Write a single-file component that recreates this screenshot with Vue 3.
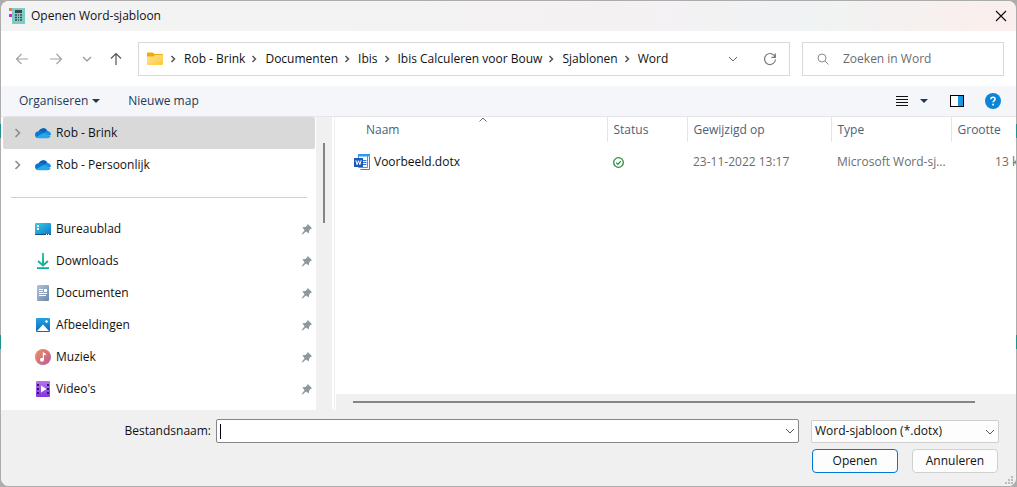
<script setup>
import { ref } from 'vue'

const crumbs = ['Rob - Brink', 'Documenten', 'Ibis', 'Ibis Calculeren voor Bouw', 'Sjablonen', 'Word']
const accounts = ref([
  { name: 'Rob - Brink', selected: true },
  { name: 'Rob - Persoonlijk', selected: false }
])
const places = [
  { name: 'Bureaublad', icon: 'desktop' },
  { name: 'Downloads', icon: 'download' },
  { name: 'Documenten', icon: 'document' },
  { name: 'Afbeeldingen', icon: 'picture' },
  { name: 'Muziek', icon: 'music' },
  { name: "Video's", icon: 'video' }
]
const fileName = ref('')
const search = ref('')
const fileType = ref('dotx')
</script>

<template>
  <div class="backdrop">
    <main class="dialog">
      <header class="titlebar">
        <svg class="app-icon" width="16" height="16" viewBox="0 0 16 16" aria-hidden="true">
          <rect x="3" width="13" height="16" fill="#80cbc4" />
          <rect y="0" width="3" height="3" fill="#ff7058" />
          <rect y="6" width="3" height="3" fill="#e815e8" />
          <rect x="6" y="2" width="7" height="3" fill="#37474f" />
          <path d="M6 7h2M9 7h1M11 7h2M6 9.500h2M9 9.500h1M11 9.500h2M6 12h2M9 12h1M11 12h2" stroke="#37474f" stroke-width="1.500" />
        </svg>
        <h1>Openen Word-sjabloon</h1>
        <button class="close" aria-label="Sluiten">
          <svg width="12" height="12" viewBox="0 0 12 12"><path d="M1 1l10 10M11 1L1 11" stroke="#111" stroke-width="1.200" /></svg>
        </button>
      </header>

      <nav class="navbar" aria-label="Navigatie">
        <div class="arrows">
          <button aria-label="Vorige"><svg width="14" height="14" viewBox="0 0 14 14"><path d="M13 7H1.500M6.500 2l-5 5 5 5" stroke="#a3a3a3" fill="none" stroke-width="1.200" /></svg></button>
          <button aria-label="Volgende"><svg width="14" height="14" viewBox="0 0 14 14"><path d="M1 7h11.500M7.500 2l5 5-5 5" stroke="#a3a3a3" fill="none" stroke-width="1.200" /></svg></button>
          <button class="recent" aria-label="Recente locaties"><svg width="10" height="10" viewBox="0 0 10 10"><path d="M1 3l4 4 4-4" stroke="#929292" fill="none" stroke-width="1.200" /></svg></button>
          <button aria-label="Omhoog"><svg width="14" height="14" viewBox="0 0 14 14"><path d="M7 13V1.500M2 6.500l5-5 5 5" stroke="#555" fill="none" stroke-width="1.200" /></svg></button>
        </div>
        <div class="address">
          <svg class="folder" width="16" height="14" viewBox="0 0 16 14" aria-hidden="true">
            <defs><linearGradient id="fold" x1="0" y1="0" x2="1" y2="1"><stop offset="0" stop-color="#ffe394" /><stop offset="1" stop-color="#ffc83a" /></linearGradient></defs>
            <path d="M0 1.500Q0 .500 1 .500h4.500L7.500 2H15q1 0 1 1v4H0z" fill="#f0a90c" />
            <path d="M0 4.500h6L8 3h7q1 0 1 1v8q0 1-1 1H1q-1 0-1-1z" fill="url(#fold)" />
          </svg>
          <ol class="crumbs">
            <li v-for="c in crumbs" :key="c">
              <svg width="6" height="8" viewBox="0 0 6 8" aria-hidden="true"><path d="M1.500 1l3 3-3 3" stroke="#555" fill="none" stroke-width="1.500" /></svg>
              <a href="#">{{ c }}</a>
            </li>
          </ol>
          <button aria-label="Vorige locaties"><svg width="10" height="10" viewBox="0 0 10 10"><path d="M1 3l4 4 4-4" stroke="#666" fill="none" /></svg></button>
          <button class="refresh" aria-label="Vernieuwen"><svg width="14" height="14" viewBox="0 0 14 14"><path d="M12.200 5.200A5.500 5.500 0 1 0 12.500 7.500M12.300 1.500v3.800H8.500" stroke="#777" fill="none" stroke-width="1.200" /></svg></button>
        </div>
        <label class="search">
          <svg width="12" height="12" viewBox="0 0 12 12" aria-hidden="true"><circle cx="5" cy="5" r="4" stroke="#8a8a8a" fill="none" /><path d="M8 8l3.500 3.500" stroke="#8a8a8a" /></svg>
          <input v-model="search" type="text" placeholder="Zoeken in Word" aria-label="Zoeken in Word" />
        </label>
      </nav>

      <div class="toolbar">
        <button>Organiseren <svg class="organise-arrow" width="8" height="4" viewBox="0 0 8 4"><path d="M0 0h8L4 4z" fill="#1e395b" /></svg></button>
        <button class="new-folder">Nieuwe map</button>
        <div class="tools">
          <button aria-label="Weergave"><svg width="12" height="11" viewBox="0 0 12 11"><path d="M0 .500h12M0 3.500h12M0 6.500h12M0 9.500h12" stroke="#111" /></svg></button>
          <button class="more" aria-label="Meer opties"><svg width="8" height="4" viewBox="0 0 8 4"><path d="M0 0h8L4 4z" fill="#1e395b" /></svg></button>
          <button class="preview" aria-label="Voorbeeldvenster">
            <svg width="14" height="12" viewBox="0 0 14 12"><rect x=".500" y=".500" width="13" height="11" fill="#fff" stroke="#000" /><rect x="8" y="1" width="5" height="10" fill="#1898e0" /></svg>
          </button>
          <button aria-label="Help">
            <svg width="16" height="16" viewBox="0 0 16 16"><circle cx="8" cy="8" r="8" fill="#0b84d8" /><path d="M5.900 6.200q0-2 2.100-2t2.100 1.800q0 1-1.100 1.800-.9.600-.9 1.500" stroke="#fff" fill="none" stroke-width="1.500" /><rect x="7.200" y="10.700" width="1.700" height="1.700" fill="#fff" /></svg>
          </button>
        </div>
      </div>

      <section class="content">
        <aside class="sidebar">
          <div class="tree">
            <ul>
              <li v-for="a in accounts" :key="a.name" class="item" :class="{ selected: a.selected }">
                <svg class="expander" width="8" height="10" viewBox="0 0 8 10" aria-hidden="true"><path d="M1.500 1l4 4-4 4" stroke="#8a8a8a" fill="none" stroke-width="1.500" /></svg>
                <svg class="place-icon" width="16" height="16" viewBox="0 0 16 16" aria-hidden="true">
                  <path d="M3.500 7A4.800 4.800 0 0 1 12.600 6l-3 3.500z" fill="#0a63b8" />
                  <path d="M4 6.200Q7 5.500 9.500 8L3 13Q0 12.500 0 9.700 0 6.500 4 6.200z" fill="#0878d2" />
                  <path d="M9 8q1.500-2.200 3.600-2 3.400.7 3.400 3.800l-3 1z" fill="#1490df" />
                  <path d="M1 12l8-4.200 6.700 3.200Q15 13.300 12.500 13.300H4Q2 13.300 1 12z" fill="#28a8ea" />
                </svg>
                <a href="#">{{ a.name }}</a>
              </li>
            </ul>
            <hr />
            <ul>
              <li v-for="p in places" :key="p.name" class="item">
                <span class="expander"></span>
                <svg class="place-icon" width="16" height="16" viewBox="0 0 16 16" aria-hidden="true">
                  <defs>
                    <linearGradient id="desk" x1="0" y1="0" x2="1" y2="1"><stop offset="0" stop-color="#35d0e8" /><stop offset="1" stop-color="#1272c8" /></linearGradient>
                    <linearGradient id="down" x1="0" y1="0" x2="0" y2="1"><stop offset="0" stop-color="#35c98e" /><stop offset="1" stop-color="#0ea59b" /></linearGradient>
                    <linearGradient id="docu" x1="0" y1="0" x2="1" y2="1"><stop offset="0" stop-color="#b3c6da" /><stop offset="1" stop-color="#6a86a8" /></linearGradient>
                    <linearGradient id="pict" x1="0" y1="0" x2="0" y2="1"><stop offset="0" stop-color="#22a3e6" /><stop offset="1" stop-color="#0f66b8" /></linearGradient>
                    <linearGradient id="musi" x1="0" y1="0" x2="1" y2="1"><stop offset="0" stop-color="#f3925a" /><stop offset="1" stop-color="#b45a9c" /></linearGradient>
                    <linearGradient id="vide" x1="0" y1="0" x2="0" y2="1"><stop offset="0" stop-color="#b673f0" /><stop offset="1" stop-color="#8436dc" /></linearGradient>
                  </defs>
                  <g v-if="p.icon === 'desktop'">
                    <rect y="2" width="16" height="12" rx="1" fill="url(#desk)" />
                    <path d="M0 13h16q0 1-1 1H1q-1 0-1-1z" fill="#0b4f86" />
                    <path d="M2 4h2v2H2zM2 7h2v2H2zM11 13h1v1h-1zM13 13h1v1h-1z" fill="#fff" />
                  </g>
                  <g v-else-if="p.icon === 'download'" fill="none">
                    <path d="M3 8l5 4.500L13 8" stroke="#16b096" stroke-width="1.800" />
                    <path d="M7 0h2v12H7zM2 14.300h12V16H2z" fill="url(#down)" />
                  </g>
                  <g v-else-if="p.icon === 'document'">
                    <rect x="2" width="12" height="16" rx="1" fill="url(#docu)" />
                    <path d="M4 4.500h4M4 6.500h4M4 8.500h8M4 10.500h7" stroke="#fff" />
                    <rect x="9" y="4" width="3" height="3" fill="#fff" />
                  </g>
                  <g v-else-if="p.icon === 'picture'">
                    <rect x="1" y="1" width="14" height="14" rx="1" fill="url(#pict)" />
                    <path d="M2 14L8 7.500 14 14z" fill="#fff" />
                    <circle cx="11.500" cy="4.500" r="1.200" fill="#fff" />
                  </g>
                  <g v-else-if="p.icon === 'music'">
                    <circle cx="8" cy="8" r="8" fill="url(#musi)" />
                    <circle cx="7" cy="10.800" r="2" fill="#fff" />
                    <path d="M7.800 11V3l3 1.800v1.800L9 5.700V11z" fill="#fff" />
                  </g>
                  <g v-else>
                    <rect x="1" width="14" height="16" rx="1" fill="url(#vide)" />
                    <path d="M3 3v11M13 3v11" stroke="#35136b" stroke-width="2" stroke-dasharray="2 2" />
                    <path d="M6 4.500l5.500 3.500L6 11.500z" fill="#fff" />
                  </g>
                </svg>
                <a href="#">{{ p.name }}</a>
                <svg class="pin" width="12" height="12" viewBox="0 0 12 12" aria-hidden="true"><path d="M6.800 1L11 5.200 9.800 5.800 8.200 7.500 7.800 10.400 5 8.600 1.500 11.500.700 10.900 3.600 7.300 1.300 4.200 4.500 4 6.200 2.300z" fill="#8c979e" /></svg>
              </li>
            </ul>
          </div>
          <div class="vscroll"><div class="vthumb"></div></div>
        </aside>

        <div class="files">
          <div class="table-wrap">
            <table>
              <colgroup><col class="c-name" /><col class="c-status" /><col class="c-date" /><col class="c-type" /><col class="c-size" /></colgroup>
              <thead>
                <tr>
                  <th class="name-head" aria-sort="ascending">Naam<svg class="sort" width="8" height="5" viewBox="0 0 8 5"><path d="M.500 4.500L4 1l3.500 3.500" stroke="#666" fill="none" /></svg></th>
                  <th>Status</th><th>Gewijzigd op</th><th>Type</th><th>Grootte</th>
                </tr>
              </thead>
              <tbody>
                <tr>
                  <td class="name-cell">
                    <div class="file">
                      <svg width="16" height="16" viewBox="0 0 16 16" aria-hidden="true">
                        <path d="M4.500.500h9v13h-9z" fill="#fff" stroke="#888" />
                        <path d="M6.500 15.500h9v-13" stroke="#777" fill="none" />
                        <path d="M4 0h12v2.500H4z" fill="#2b9bf0" />
                        <path d="M9 6.500h3.500M9 8.500h3.500M9 10.500h3.500" stroke="#2f72cf" />
                        <rect y="4" width="9" height="9" fill="#185abd" />
                        <path d="M1.800 6.200l1.300 4.500 1.400-4 1.400 4 1.300-4.500" stroke="#fff" fill="none" />
                      </svg>
                      <a href="#">Voorbeeld.dotx</a>
                    </div>
                  </td>
                  <td><svg class="ok" width="11" height="11" viewBox="0 0 11 11" role="img" aria-label="Beschikbaar"><circle cx="5.500" cy="5.500" r="4.800" stroke="#218f3b" fill="#fff" stroke-width="1.300" /><path d="M3.200 5.700l1.600 1.600 3-3.200" stroke="#218f3b" fill="none" stroke-width="1.200" /></svg></td>
                  <td>23-11-2022 13:17</td>
                  <td>Microsoft Word-sj...</td>
                  <td class="size">13 kB</td>
                </tr>
              </tbody>
            </table>
          </div>
          <div class="hscroll"><div class="hthumb"></div></div>
        </div>
      </section>

      <footer class="footer">
        <label for="fname">Bestandsnaam:</label>
        <div class="combo">
          <span class="caret"></span>
          <input id="fname" v-model="fileName" type="text" />
          <button aria-label="Eerdere bestandsnamen"><svg width="10" height="10" viewBox="0 0 10 10"><path d="M1 3l4 4 4-4" stroke="#555" fill="none" /></svg></button>
        </div>
        <div class="type-box">
          <select v-model="fileType" aria-label="Bestandstype"><option value="dotx">Word-sjabloon (*.dotx)</option></select>
          <svg width="10" height="10" viewBox="0 0 10 10" aria-hidden="true"><path d="M1 3l4 4 4-4" stroke="#555" fill="none" /></svg>
        </div>
        <div class="actions">
          <button class="primary">Openen</button>
          <button>Annuleren</button>
        </div>
        <svg class="grip" width="8" height="8" viewBox="0 0 8 8" aria-hidden="true"><path d="M6 0h2v2H6zM3 3h2v2H3zM6 3h2v2H6zM0 6h2v2H0zM3 6h2v2H3zM6 6h2v2H6z" fill="#bbb" /></svg>
      </footer>
    </main>
  </div>
</template>

<style>
body { margin: 0; }
</style>

<style scoped>
* { box-sizing: border-box; }
.backdrop {
  display: flex;
  min-height: 100vh;
  padding: 1px;
  background:
    linear-gradient(#1f9290, #1f9290) 0 124px / 100% 14px no-repeat,
    linear-gradient(#1f9290, #1f9290) 0 335px / 100% 14px no-repeat,
    #adadad;
  font: 12px/16px "Open Sans", "Noto Sans", sans-serif;
  color: #111;
}
.dialog {
  flex: 1;
  min-width: 0;
  display: flex;
  flex-direction: column;
  border-radius: 8px;
  background: #fff;
  overflow: hidden;
}
button {
  display: flex;
  align-items: center;
  padding: 0;
  border: 0;
  background: none;
  font: inherit;
  color: inherit;
}
input, select { font: inherit; color: inherit; border: 0; outline: 0; padding: 0; min-width: 0; }
a { color: inherit; text-decoration: none; white-space: nowrap; }
ul, ol { list-style: none; margin: 0; padding: 0; }
svg { display: block; flex: none; }

.titlebar {
  display: flex;
  align-items: center;
  height: 30px;
  padding: 0 9px 0 8px;
  background: linear-gradient(90deg, #f3f3f3 0 35%, #f5f1f3 60%, #f0f3f3 80%, #faefed 97%);
}
h1 { margin: 0 0 0 6px; font-size: inherit; font-weight: 400; }
.close { margin-left: auto; }

.navbar { display: flex; align-items: center; height: 55px; padding: 0 12px 0 14px; }
.arrows { display: flex; align-items: center; width: 123px; gap: 20px; }
.recent { margin: 0 -3px 0 -1px; }
.address {
  flex: 1;
  display: flex;
  align-items: center;
  height: 34px;
  padding: 0 12px 0 8px;
  border: 1px solid #d9d9d9;
}
.crumbs { flex: 1; display: flex; gap: 6px; margin-left: 7px; }
.crumbs li { display: flex; align-items: center; gap: 8px; }
.refresh { margin-left: 25px; }
.search {
  display: flex;
  align-items: center;
  width: 202px;
  height: 34px;
  margin-left: 12px;
  padding: 0 14px;
  gap: 14px;
  border: 1px solid #d9d9d9;
}
.search input { flex: 1; background: none; }
.search input::placeholder { color: #6b6b6b; opacity: 1; }

.toolbar {
  display: flex;
  align-items: center;
  height: 31px;
  padding: 0 15px 0 18px;
  background: #f4f6f9;
  border-bottom: 1px solid #e6e6e8;
  color: #1e395b;
}
.organise-arrow { margin-left: 4px; }
.new-folder { margin-left: 28px; }
.tools { display: flex; align-items: center; margin-left: auto; }
.more { margin-left: 12px; }
.preview { margin: 0 21px 0 22px; }

.content { flex: 1; display: flex; min-height: 0; }
.sidebar { display: flex; width: 334px; border-right: 1px solid #f0f0f0; }
.tree { flex: 1; padding: 0 1px 0 2px; }
.item { display: flex; align-items: center; height: 32px; padding: 0 2px 0 11px; border-radius: 2px; }
.selected { background: #d9d9d9; }
.expander { width: 8px; margin-right: 13px; }
.place-icon { margin-right: 5px; }
.pin { margin-left: auto; }
hr { height: 1px; margin: 16px 8px 15px; border: 0; background: #d0d0d0; }
.vscroll { width: 16px; margin-right: 2px; padding: 26px 7px 0; background: #f0f0f0; }
.vthumb { height: 80px; width: 2px; background: #858585; }

.files { flex: 1; min-width: 0; display: flex; flex-direction: column; padding-left: 1px; }
.table-wrap { flex: 1; overflow: hidden; }
table { width: 696px; table-layout: fixed; border-collapse: collapse; }
.c-name { width: 271px; }
.c-status { width: 80px; }
.c-date { width: 144px; }
.c-type { width: 120px; }
.c-size { width: 81px; }
th, td { padding: 0 6px; text-align: left; font-weight: 400; white-space: nowrap; }
th { height: 25px; border-right: 1px solid #e5e5e5; color: #4c607a; }
.name-head { position: relative; padding-left: 30px; }
.sort { position: absolute; top: 0; left: 143px; }
td { height: 40px; color: #6d6d6d; }
.name-cell { padding-left: 18px; color: #111; }
.file { display: flex; align-items: center; gap: 4px; }
.size { text-align: right; }
.hscroll { height: 16px; padding: 7px 41px 0 17px; background: #f0f0f0; }
.hthumb { height: 2px; background: #858585; }

.footer {
  position: relative;
  display: grid;
  grid-template-columns: 210px 1fr 188px;
  align-items: center;
  row-gap: 6px;
  padding: 9px 17px 13px 0;
  background: #f0f0f0;
}
.footer label { text-align: right; }
.combo {
  display: flex;
  align-items: center;
  height: 24px;
  margin: 0 12px 0 5px;
  padding: 0 3px;
  background: #fff;
  border: 1px solid #868686;
  border-radius: 2px;
}
.caret { width: 1px; height: 15px; background: #000; }
.combo input { flex: 1; }
.type-box { position: relative; }
.type-box select {
  width: 100%;
  height: 23px;
  padding: 0 3px;
  appearance: none;
  background: #fdfdfd;
  border: 1px solid #cfcfcf;
  border-radius: 2px;
}
.type-box svg { position: absolute; right: 4px; top: 7px; pointer-events: none; }
.actions { grid-column: 3; display: grid; grid-template-columns: 1fr 1fr; gap: 14px; padding: 0 1px; }
.actions button {
  justify-content: center;
  height: 24px;
  background: #fdfdfd;
  border: 1px solid #d0d0d0;
  border-radius: 4px;
}
.actions .primary { border-color: #0078d4; }
.grip { position: absolute; right: 3px; bottom: 2px; }
</style>
